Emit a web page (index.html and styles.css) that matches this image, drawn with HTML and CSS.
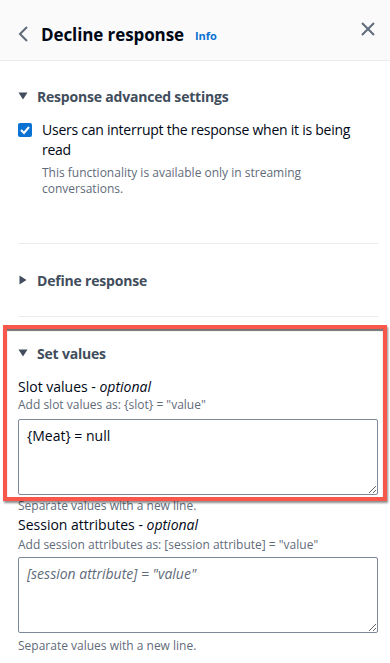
FILE: index.html
```html
<!DOCTYPE html>
<html lang="en">
<head>
<meta charset="utf-8">
<title>Decline response</title>
<link rel="stylesheet" href="styles.css">
</head>
<body>
<header class="header">
  <svg class="back" width="12" height="18" viewBox="0 0 12 18"><path d="M9 2 L2 9 L9 16" fill="none" stroke="#5f6b7a" stroke-width="2"/></svg>
  <h1 class="title">Decline response</h1>
  <a class="info">Info</a>
  <svg class="close" width="16" height="16" viewBox="0 0 16 16"><path d="M2 2 L14 14 M14 2 L2 14" fill="none" stroke="#5f6b7a" stroke-width="2"/></svg>
</header>

<main class="content">
  <section class="sec sec-first">
    <div class="exp-head">
      <svg class="caret" width="10" height="10" viewBox="0 0 10 10"><path d="M0.5 1.5 L9.5 1.5 L5 8.5 Z" fill="#414d5c"/></svg>
      <span>Response advanced settings</span>
    </div>
    <div class="check-row">
      <span class="checkbox"><svg width="14" height="14" viewBox="0 0 14 14"><path d="M3 7 L6 10 L11 4" fill="none" stroke="#fff" stroke-width="2"/></svg></span>
      <div>
        <div class="check-label">Users can interrupt the response when it is being read</div>
        <div class="check-desc">This functionality is available only in streaming conversations.</div>
      </div>
    </div>
  </section>

  <hr class="divider div-a">

  <section class="sec sec-mid">
    <div class="exp-head">
      <svg class="caret" width="10" height="10" viewBox="0 0 10 10"><path d="M1.5 0.5 L8.5 5 L1.5 9.5 Z" fill="#414d5c"/></svg>
      <span>Define response</span>
    </div>
  </section>

  <hr class="divider">

  <section class="sec sec-set">
    <div class="exp-head">
      <svg class="caret" width="10" height="10" viewBox="0 0 10 10"><path d="M0.5 1.5 L9.5 1.5 L5 8.5 Z" fill="#414d5c"/></svg>
      <span>Set values</span>
    </div>
    <div class="field field-slot">
      <div class="label">Slot values - <i>optional</i></div>
      <div class="hint">Add slot values as: {slot} = "value"</div>
      <textarea class="ta">{Meat} = null</textarea>
      <div class="hint hint-after">Separate values with a new line.</div>
    </div>
    <div class="field field-session">
      <div class="label">Session attributes - <i>optional</i></div>
      <div class="hint">Add session attributes as: [session attribute] = "value"</div>
      <textarea class="ta" placeholder='[session attribute] = "value"'></textarea>
      <div class="hint hint-after">Separate values with a new line.</div>
    </div>
    <div class="annot"></div>
  </section>
</main>
</body>
</html>
```
FILE: styles.css
```css
* { box-sizing: border-box; }
html, body { margin: 0; padding: 0; background: #fff; }
body {
  font-family: "Open Sans", "Liberation Sans", sans-serif;
  color: #000716;
  width: 390px;
  height: 663px;
  overflow: hidden;
}
.header {
  height: 61px;
  background: #fafafa;
  border-bottom: 1px solid #e9ebed;
  display: flex;
  align-items: center;
  padding: 8px 14px 0 18px;
}
.back { flex: none; margin-right: 11px; }
.title {
  margin: 0;
  font-size: 17px;
  font-weight: 700;
  color: #000716;
  letter-spacing: -0.1px;
}
.info {
  margin-left: 11px;
  font-size: 11px;
  font-weight: 700;
  color: #0972d3;
  margin-top: 3px;
}
.close { margin-left: auto; margin-top: -10px; flex: none; }

.content { padding: 0 12px 0 18px; }
.sec { position: relative; }
.sec-first { padding-top: 24px; }
.sec-mid { padding: 25px 0; }
.sec-set { padding-top: 25px; }
.exp-head {
  display: flex;
  align-items: center;
  height: 22px;
  font-size: 14px;
  font-weight: 700;
  color: #414d5c;
  letter-spacing: -0.2px;
}
.caret { margin-right: 9px; flex: none; }
.check-row {
  display: flex;
  margin-top: 13px;
}
.checkbox {
  flex: none;
  width: 14px;
  height: 14px;
  border-radius: 2px;
  background: #0972d3;
  margin-top: 3px;
  margin-right: 10px;
  display: flex;
}
.check-label {
  font-size: 14px;
  line-height: 20px;
  color: #000716;
  letter-spacing: -0.25px;
}
.check-desc {
  font-size: 12px;
  line-height: 16px;
  color: #5f6b7a;
  margin-top: 5px;
  padding-right: 40px;
}
.divider {
  border: 0;
  border-top: 1px solid #e9ebed;
  margin: 0;
}
.div-a { margin-top: 46px; }
.field-slot { margin-top: 13px; }
.label {
  font-size: 14px;
  line-height: 20px;
  color: #000716;
}
.label i { font-style: italic; }
.hint {
  font-size: 12px;
  line-height: 16px;
  color: #5f6b7a;
}
.ta {
  display: block;
  width: 360px;
  height: 76px;
  margin-top: 6px;
  border: 1px solid #7d8998;
  border-radius: 2px;
  padding: 6px 8px;
  font-family: "Open Sans", "Liberation Sans", sans-serif;
  font-size: 14px;
  line-height: 20px;
  color: #000716;
  resize: vertical;
  background: #fff;
}
.ta::placeholder { color: #5f6b7a; font-style: italic; }
.hint-after { margin-top: 3px; }
.field-session { margin-top: 1px; }
.field-session .hint { margin-top: 2px; }
.field-session .ta { margin-top: 4px; }
.field-session .hint-after { margin-top: 5px; }

.annot {
  position: absolute;
  left: -15px;
  top: 8px;
  width: 384px;
  height: 176px;
  border: 4px solid #f9574b;
  box-shadow: 1px 2px 2px rgba(0,0,0,0.45), inset 0 2px 1px rgba(0,0,0,0.55);
  pointer-events: none;
}
```
